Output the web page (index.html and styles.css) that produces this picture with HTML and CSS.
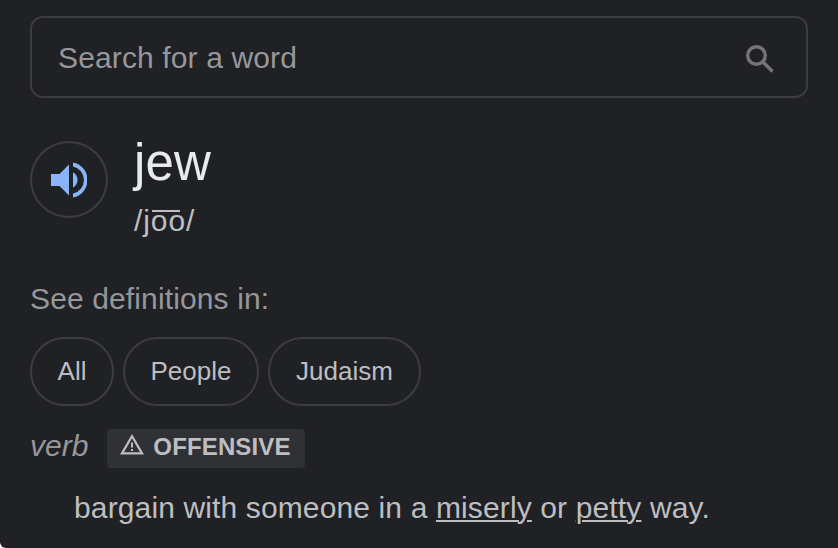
FILE: index.html
```
<!DOCTYPE html>
<html lang="en">
<head>
    <meta charset="UTF-8">
    <meta name="viewport" content="width=device-width, initial-scale=1.0">
    <title>Dictionary</title>
    <link rel="stylesheet" href="styles.css">
</head>
<body>
    <main class="dictionary">
        <form class="search">
            <input class="search-input" type="text" placeholder="Search for a word" aria-label="Search for a word">
            <svg class="search-icon" viewBox="0 0 28 28">
                <circle cx="10.500" cy="10.500" r="8.800"/>
                <path d="M17 17l9.500 9.500"/>
            </svg>
        </form>

        <div class="entry">
            <button class="speaker" type="button" aria-label="Listen">
                <svg class="speaker-icon" viewBox="0 0 36 36">
                    <path d="M0 12h8.500L18 2.500v31L8.500 24H0z"/>
                    <path d="M22 10.500a8.500 8.500 0 0 1 0 15z"/>
                    <path d="M22 .5a17.800 17.800 0 0 1 0 35v-4a13.800 13.800 0 0 0 0-27z"/>
                </svg>
            </button>
            <div class="entry-text">
                <h1 class="word">jew</h1>
                <div class="phonetic">/j<span class="long">oo</span>/</div>
            </div>
        </div>

        <p class="see">See definitions in:</p>
        <div class="chips">
            <button class="chip chip-all" type="button">All</button>
            <button class="chip chip-people" type="button">People</button>
            <button class="chip chip-judaism" type="button">Judaism</button>
        </div>

        <div class="usage">
            <i class="part">verb</i>
            <span class="badge">
                <svg class="badge-icon" viewBox="0 0 24 21">
                    <path d="M12 0 0 20.500h24zM12 4.300l8 13.900H4z" fill-rule="evenodd"/>
                    <path d="M11 8.500h2v5h-2zM11 15h2v2h-2z"/>
                </svg>
                <span class="badge-text">OFFENSIVE</span>
            </span>
        </div>

        <p class="definition">bargain with someone in a <a class="link">miserly</a> or <a class="link">petty</a> way.</p>
    </main>
</body>
</html>
```
FILE: styles.css
```
* {
    box-sizing: border-box;
}
html {
    background: #fff;
}
body {
    margin: 0;
    font-family: "Liberation Sans", Arial, sans-serif;
    font-size: 30px;
    letter-spacing: 0.13px;
    color: #bdbec1;
}
.dictionary {
    height: 548px;
    padding: 16px 30px 0;
    overflow: hidden;
    background: #202124;
    border-bottom-left-radius: 6px;
}
.search {
    display: flex;
    align-items: center;
    justify-content: space-between;
    height: 82px;
    padding: 1px 32px 0 26px;
    border: 2px solid #3c3d41;
    border-radius: 13px;
}
.search-input {
    width: 400px;
    padding: 0;
    border: none;
    outline: none;
    background: none;
    font: inherit;
    letter-spacing: inherit;
    color: #96979b;
}
.search-input::placeholder {
    color: #96979b;
}
.search-icon {
    width: 28px;
    height: 28px;
    margin-top: 2px;
    fill: none;
    stroke: #757575;
    stroke-width: 3.4;
}
.entry {
    display: flex;
    gap: 26px;
    margin-top: 43px;
    height: 96px;
}
.speaker {
    display: flex;
    align-items: center;
    justify-content: center;
    width: 78px;
    height: 77px;
    padding: 0;
    border: 2px solid #3c3d41;
    border-radius: 50%;
    background: none;
}
.speaker-icon {
    width: 36px;
    height: 36px;
    fill: #8ab4f8;
}
.word {
    margin: -8px 0 0;
    font-size: 51px;
    font-weight: normal;
    line-height: 60px;
    color: #e8eaed;
}
.phonetic {
    margin-top: 10px;
    line-height: 36px;
    letter-spacing: 0.9px;
}
.long {
    position: relative;
}
/* long vowel bar above both letters */
.long::before {
    content: "";
    position: absolute;
    top: 6px;
    left: 1px;
    width: 28px;
    height: 2px;
    background: #bdbec1;
}
.see {
    margin: 44px 0 0;
    line-height: 36px;
    color: #96979b;
}
.chips {
    display: flex;
    gap: 9px;
    margin-top: 20px;
}
.chip {
    height: 69px;
    padding: 0;
    border: 2px solid #3c3d41;
    border-radius: 35px;
    background: none;
    font: inherit;
    font-size: 26px;
    color: #bdbec1;
}
.chip-all {
    width: 84px;
}
.chip-people {
    width: 136px;
}
.chip-judaism {
    width: 153px;
}
.usage {
    display: flex;
    gap: 19px;
    margin-top: 23px;
    height: 39px;
}
.part {
    line-height: 33px;
    letter-spacing: 0;
    color: #96979b;
}
.badge {
    display: flex;
    gap: 9px;
    width: 198px;
    padding: 5px 0 0 13px;
    border-radius: 4px;
    background: #303134;
}
.badge-icon {
    width: 24px;
    height: 21px;
    fill: #bdbec1;
}
.badge-text {
    font-size: 24px;
    font-weight: bold;
    line-height: 26px;
}
.definition {
    margin: 22px 0 0 44px;
    line-height: 36px;
    white-space: nowrap;
}
.link {
    text-decoration: underline;
    text-decoration-thickness: 2px;
    text-underline-offset: 2px;
}
```
